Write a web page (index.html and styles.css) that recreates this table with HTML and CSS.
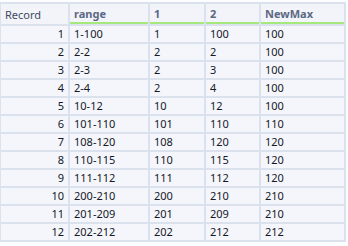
FILE: index.html
```html
<!DOCTYPE html>
<html lang="en">
<head>
  <meta charset="UTF-8">
  <title>Results</title>
  <link rel="stylesheet" href="styles.css">
</head>
<body>
  <table class="grid">
    <colgroup>
      <col class="col-record">
      <col class="col-range">
      <col class="col-a">
      <col class="col-b">
      <col class="col-max">
    </colgroup>
    <thead>
      <tr>
        <th class="record">Record</th>
        <th class="field">range</th>
        <th class="field">1</th>
        <th class="field">2</th>
        <th class="field">NewMax</th>
      </tr>
    </thead>
    <tbody>
      <tr><td class="num">1</td><td>1-100</td><td>1</td><td>100</td><td>100</td></tr>
      <tr><td class="num">2</td><td>2-2</td><td>2</td><td>2</td><td>100</td></tr>
      <tr><td class="num">3</td><td>2-3</td><td>2</td><td>3</td><td>100</td></tr>
      <tr><td class="num">4</td><td>2-4</td><td>2</td><td>4</td><td>100</td></tr>
      <tr><td class="num">5</td><td>10-12</td><td>10</td><td>12</td><td>100</td></tr>
      <tr><td class="num">6</td><td>101-110</td><td>101</td><td>110</td><td>110</td></tr>
      <tr><td class="num">7</td><td>108-120</td><td>108</td><td>120</td><td>120</td></tr>
      <tr><td class="num">8</td><td>110-115</td><td>110</td><td>115</td><td>120</td></tr>
      <tr><td class="num">9</td><td>111-112</td><td>111</td><td>112</td><td>120</td></tr>
      <tr><td class="num">10</td><td>200-210</td><td>200</td><td>210</td><td>210</td></tr>
      <tr><td class="num">11</td><td>201-209</td><td>201</td><td>209</td><td>210</td></tr>
      <tr><td class="num">12</td><td>202-212</td><td>202</td><td>212</td><td>212</td></tr>
    </tbody>
  </table>
</body>
</html>
```

FILE: styles.css
```css
body {
  margin: 0;
  background: #fcfdfe;
  font-family: "Noto Sans", "Open Sans", sans-serif;
  font-size: 11px;
  color: #141828;
}

.grid {
  border-collapse: separate;
  border-spacing: 2px;
  background: #dbe2ee;
  margin: 2px 0 0 -1px;
  table-layout: fixed;
  width: 347px;
}

.col-record { width: 67px; }
.col-range { width: 78px; }
.col-a { width: 54px; }
.col-b { width: 53px; }
.col-max { width: 83px; }

.grid th,
.grid td {
  background: #f4f6fb;
  padding: 0 4px;
  text-align: left;
  white-space: nowrap;
  overflow: hidden;
}

.grid th {
  height: 20px;
  font-weight: normal;
  background: #f2f4f9;
}

.grid th.record {
  color: #3f4a63;
}

.grid th.field {
  font-weight: bold;
  color: #5c6884;
  height: 18px;
  border-bottom: 2px solid #a4e87e;
}

.grid td {
  height: 16px;
  line-height: 16px;
}

.grid td.num {
  text-align: right;
}
```
